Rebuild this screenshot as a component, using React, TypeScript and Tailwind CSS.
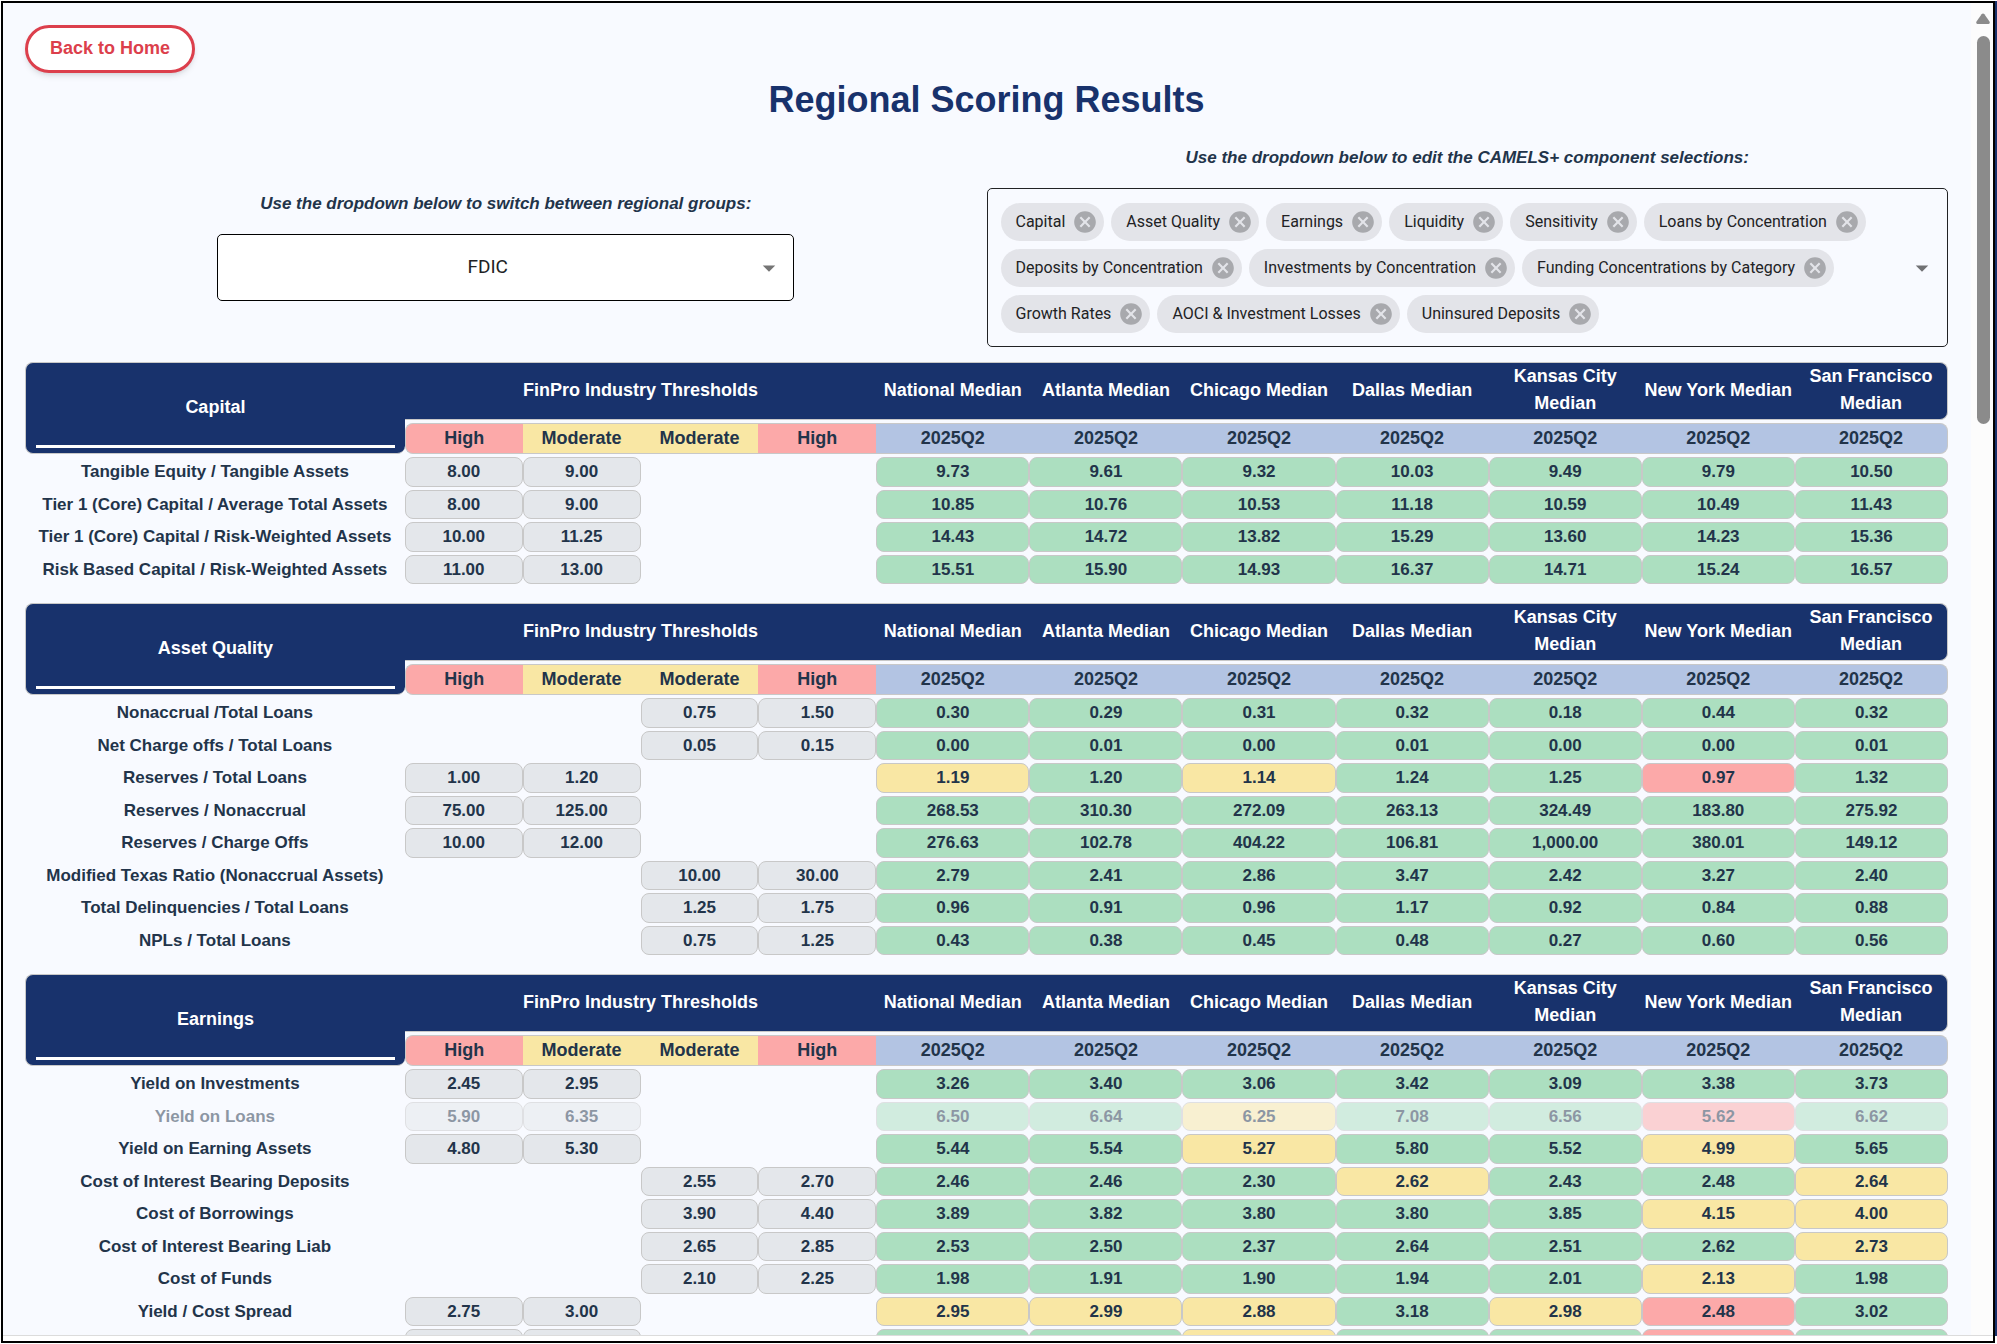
import { useState } from 'react'
import clsx from 'clsx'
import { MdArrowDropDown, MdCancel } from 'react-icons/md'

type Tone = 'g' | 'y' | 'r'

interface Row {
  name: string
  // low-side high / moderate, then high-side moderate / high
  thresholds: (string | null)[]
  values: string[]
  // one letter per value: g = ok, y = moderate, r = high
  tones?: string
  muted?: boolean
}

interface Section {
  title: string
  rows: Row[]
}

const TONE_CLASS: Record<Tone, string> = {
  g: 'bg-[#acdfc0]',
  y: 'bg-[#f9e7a4]',
  r: 'bg-[#fca9a9]',
}

const COMPONENTS = [
  'Capital',
  'Asset Quality',
  'Earnings',
  'Liquidity',
  'Sensitivity',
  'Loans by Concentration',
  'Deposits by Concentration',
  'Investments by Concentration',
  'Funding Concentrations by Category',
  'Growth Rates',
  'AOCI & Investment Losses',
  'Uninsured Deposits',
]

const REGIONS = ['National', 'Atlanta', 'Chicago', 'Dallas', 'Kansas City', 'New York', 'San Francisco']

const low = (high: string, moderate: string) => [high, moderate, null, null]
const upper = (moderate: string, high: string) => [null, null, moderate, high]

const SECTIONS: Section[] = [
  {
    title: 'Capital',
    rows: [
      { name: 'Tangible Equity / Tangible Assets', thresholds: low('8.00', '9.00'), values: ['9.73', '9.61', '9.32', '10.03', '9.49', '9.79', '10.50'] },
      { name: 'Tier 1 (Core) Capital / Average Total Assets', thresholds: low('8.00', '9.00'), values: ['10.85', '10.76', '10.53', '11.18', '10.59', '10.49', '11.43'] },
      { name: 'Tier 1 (Core) Capital / Risk-Weighted Assets', thresholds: low('10.00', '11.25'), values: ['14.43', '14.72', '13.82', '15.29', '13.60', '14.23', '15.36'] },
      { name: 'Risk Based Capital / Risk-Weighted Assets', thresholds: low('11.00', '13.00'), values: ['15.51', '15.90', '14.93', '16.37', '14.71', '15.24', '16.57'] },
    ],
  },
  {
    title: 'Asset Quality',
    rows: [
      { name: 'Nonaccrual /Total Loans', thresholds: upper('0.75', '1.50'), values: ['0.30', '0.29', '0.31', '0.32', '0.18', '0.44', '0.32'] },
      { name: 'Net Charge offs / Total Loans', thresholds: upper('0.05', '0.15'), values: ['0.00', '0.01', '0.00', '0.01', '0.00', '0.00', '0.01'] },
      { name: 'Reserves / Total Loans', thresholds: low('1.00', '1.20'), values: ['1.19', '1.20', '1.14', '1.24', '1.25', '0.97', '1.32'], tones: 'ygyggrg' },
      { name: 'Reserves / Nonaccrual', thresholds: low('75.00', '125.00'), values: ['268.53', '310.30', '272.09', '263.13', '324.49', '183.80', '275.92'] },
      { name: 'Reserves / Charge Offs', thresholds: low('10.00', '12.00'), values: ['276.63', '102.78', '404.22', '106.81', '1,000.00', '380.01', '149.12'] },
      { name: 'Modified Texas Ratio (Nonaccrual Assets)', thresholds: upper('10.00', '30.00'), values: ['2.79', '2.41', '2.86', '3.47', '2.42', '3.27', '2.40'] },
      { name: 'Total Delinquencies / Total Loans', thresholds: upper('1.25', '1.75'), values: ['0.96', '0.91', '0.96', '1.17', '0.92', '0.84', '0.88'] },
      { name: 'NPLs / Total Loans', thresholds: upper('0.75', '1.25'), values: ['0.43', '0.38', '0.45', '0.48', '0.27', '0.60', '0.56'] },
    ],
  },
  {
    title: 'Earnings',
    rows: [
      { name: 'Yield on Investments', thresholds: low('2.45', '2.95'), values: ['3.26', '3.40', '3.06', '3.42', '3.09', '3.38', '3.73'] },
      { name: 'Yield on Loans', thresholds: low('5.90', '6.35'), values: ['6.50', '6.64', '6.25', '7.08', '6.56', '5.62', '6.62'], tones: 'ggyggrg', muted: true },
      { name: 'Yield on Earning Assets', thresholds: low('4.80', '5.30'), values: ['5.44', '5.54', '5.27', '5.80', '5.52', '4.99', '5.65'], tones: 'ggyggyg' },
      { name: 'Cost of Interest Bearing Deposits', thresholds: upper('2.55', '2.70'), values: ['2.46', '2.46', '2.30', '2.62', '2.43', '2.48', '2.64'], tones: 'gggyggy' },
      { name: 'Cost of Borrowings', thresholds: upper('3.90', '4.40'), values: ['3.89', '3.82', '3.80', '3.80', '3.85', '4.15', '4.00'], tones: 'gggggyy' },
      { name: 'Cost of Interest Bearing Liab', thresholds: upper('2.65', '2.85'), values: ['2.53', '2.50', '2.37', '2.64', '2.51', '2.62', '2.73'], tones: 'ggggggy' },
      { name: 'Cost of Funds', thresholds: upper('2.10', '2.25'), values: ['1.98', '1.91', '1.90', '1.94', '2.01', '2.13', '1.98'], tones: 'gggggyg' },
      { name: 'Yield / Cost Spread', thresholds: low('2.75', '3.00'), values: ['2.95', '2.99', '2.88', '3.18', '2.98', '2.48', '3.02'], tones: 'yyygyrg' },
      { name: '', thresholds: low('', ''), values: ['', '', '', '', '', '', ''], tones: 'ggyggrg' },
    ],
  },
]

function Chip({ label, onDelete }: { label: string; onDelete: () => void }) {
  return (
    <li className="flex h-[38px] items-center gap-[7px] rounded-full bg-[#e3e4e9] pr-1.5 pl-[15px] font-[Roboto,sans-serif] text-base text-[#212224]">
      {label}
      <button type="button" aria-label={`Remove ${label}`} onClick={onDelete} className="text-[#a8a9ad]">
        <MdCancel className="size-[26px]" />
      </button>
    </li>
  )
}

function SectionTable({ section }: { section: Section }) {
  return (
    <table className="w-full table-fixed border-separate border-spacing-x-0 border-spacing-y-[3px] text-center text-[17px] leading-6 font-bold">
      <colgroup>
        <col className="w-[19.75%]" />
        <col className="w-[6.13%]" />
        <col className="w-[6.13%]" />
        <col className="w-[6.13%]" />
        <col className="w-[6.13%]" />
        {REGIONS.map((region) => (
          <col key={region} />
        ))}
      </colgroup>
      <thead className="text-lg leading-[27px]">
        <tr className="h-[58px] text-white">
          <th rowSpan={2} className="relative rounded-l-lg rounded-br-lg border border-r-0 border-[#c8c8c8] bg-[#18326c] p-0 pb-0.5">
            {section.title}
            <span className="absolute inset-x-2.5 bottom-[5px] h-[3px] bg-white" />
          </th>
          <th colSpan={4} className="border-y border-[#c8c8c8] bg-[#18326c] p-0 pb-0.5">
            FinPro Industry Thresholds
          </th>
          {REGIONS.map((region) => (
            <th key={region} className="border-y border-[#c8c8c8] bg-[#18326c] p-0 pb-0.5 last:rounded-r-lg last:border-r">
              {region} Median
            </th>
          ))}
        </tr>
        <tr className="h-[31px]">
          <th className="rounded-l-lg border-y border-l border-[#c8c8c8] bg-[#fca9a9] p-0">High</th>
          <th className="border-y border-[#c8c8c8] bg-[#f9e7a4] p-0">Moderate</th>
          <th className="border-y border-[#c8c8c8] bg-[#f9e7a4] p-0">Moderate</th>
          <th className="border-y border-[#c8c8c8] bg-[#fca9a9] p-0">High</th>
          {REGIONS.map((region) => (
            <th key={region} className="border-y border-[#c8c8c8] bg-[#b3c4e3] p-0 last:rounded-r-lg last:border-r">
              2025Q2
            </th>
          ))}
        </tr>
      </thead>
      <tbody>
        {section.rows.map((row, r) => (
          <tr key={r} className={clsx('odd:h-[30px] even:h-[29px]', row.muted && 'opacity-50')}>
            <th scope="row" className="p-0">
              {row.name}
            </th>
            {row.thresholds.map((value, i) =>
              value === null ? (
                <td key={i} className="p-0" />
              ) : (
                <td key={i} className="rounded-lg border border-[#c8c8c8] bg-[#e4e7eb] p-0">
                  {value}
                </td>
              )
            )}
            {row.values.map((value, i) => (
              <td
                key={i}
                className={clsx('rounded-lg border border-[#c8c8c8] p-0', TONE_CLASS[(row.tones?.[i] ?? 'g') as Tone])}
              >
                {value}
              </td>
            ))}
          </tr>
        ))}
      </tbody>
    </table>
  )
}

export default function App() {
  const [group, setGroup] = useState('FDIC')
  const [selected, setSelected] = useState(COMPONENTS)

  return (
    <div className="flex h-screen bg-white pt-px pl-px font-['Liberation_Sans',Arial,sans-serif] text-[#22344a]">
      <div className="mb-px flex min-w-0 flex-1 flex-col border-2 border-black pb-[5px]">
        <div className="flex min-h-0 flex-1 border-b border-[#dcdcdc] bg-[#f8faff]">
          <main className="min-w-0 flex-1 overflow-hidden pt-[22px] pr-[23px] pl-[22px]">
            <button
              type="button"
              className="flex h-12 items-center rounded-full border-3 border-[#dc3f4c] bg-white px-[22px] pb-0.5 text-lg font-bold text-[#dc3f4c] shadow-md shadow-black/10"
            >
              Back to Home
            </button>

            <h1 className="text-center text-4xl leading-[54px] font-bold text-[#18326c]">Regional Scoring Results</h1>

            <div className="mt-[19px] grid grid-cols-2 items-center">
              <div className="flex flex-col items-center gap-[18px]">
                <label htmlFor="group" className="text-[17px] leading-6 font-bold italic">
                  Use the dropdown below to switch between regional groups:
                </label>
                <div className="relative w-3/5">
                  <select
                    id="group"
                    value={group}
                    onChange={(e) => setGroup(e.target.value)}
                    className="h-[67px] w-full appearance-none rounded-[5px] border border-black bg-white pr-[52px] pl-4 text-center font-[Roboto,sans-serif] text-[19px] text-[#212224]"
                  >
                    <option>FDIC</option>
                  </select>
                  <MdArrowDropDown className="pointer-events-none absolute inset-y-0 right-2.5 my-auto size-[30px] text-[#757575]" />
                </div>
              </div>

              <div className="flex flex-col items-center gap-[18px]">
                <span id="components-label" className="text-[17px] leading-6 font-bold italic">
                  Use the dropdown below to edit the CAMELS+ component selections:
                </span>
                <div
                  role="group"
                  aria-labelledby="components-label"
                  className="flex w-full items-center rounded-[5px] border border-[#212224] pt-3.5 pr-2.5 pb-[13px] pl-[13px]"
                >
                  <ul className="flex flex-1 flex-wrap gap-x-[7px] gap-y-2">
                    {selected.map((label) => (
                      <Chip key={label} label={label} onDelete={() => setSelected(selected.filter((s) => s !== label))} />
                    ))}
                  </ul>
                  <button type="button" aria-label="Open component list" className="text-[#707174]">
                    <MdArrowDropDown className="size-[30px]" />
                  </button>
                </div>
              </div>
            </div>

            <div className="mt-3 flex flex-col gap-[13px]">
              {SECTIONS.map((section) => (
                <SectionTable key={section.title} section={section} />
              ))}
            </div>
          </main>

          {/* scrollbar */}
          <div className="flex w-[22px] flex-col items-center gap-3 bg-[#fcfcfc] pt-2.5 pl-0.5">
            <svg viewBox="0 0 14 11" className="h-[11px] w-3.5 shrink-0" fill="#8b8b8b">
              <path d="M7 0.5Q7.8 0.5 8.4 1.3L13.5 8.6Q14.4 10.8 12.6 11H1.4Q-0.4 10.8 0.5 8.6L5.6 1.3Q6.2 0.5 7 0.5Z" />
            </svg>
            <div className="h-[388px] w-[13px] rounded-full bg-[#8b8b8b]" />
          </div>
        </div>
      </div>
      <div className="mb-2 w-0.5 bg-[#18326c]" />
    </div>
  )
}
